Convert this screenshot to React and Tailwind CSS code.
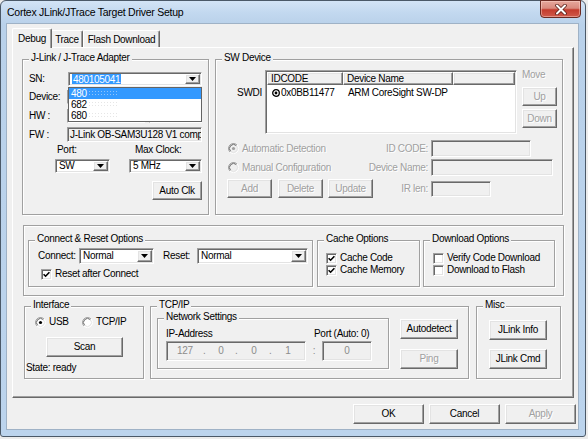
import React from 'react';

const raised = 'border border-t-white border-l-white border-r-[#696969] border-b-[#696969] shadow-[inset_-1px_-1px_0_#a0a0a0,inset_1px_1px_0_#e3e3e3] bg-[#f0f0f0]';
const sunken = 'border border-t-[#a0a0a0] border-l-[#a0a0a0] border-r-white border-b-white shadow-[inset_1px_1px_0_#696969,inset_-1px_-1px_0_#e3e3e3]';
const grayText = 'text-[#a0a0a0] [text-shadow:1px_1px_0_#fff]';

const Button = ({ children, className = '', disabled }) => (
  <div className={`${raised} flex items-center justify-center shrink-0 whitespace-nowrap ${disabled ? grayText : ''} ${className}`}>
    {children}
  </div>
);

const Arrow = () => (
  <div className={`${raised} w-[15px] h-full flex items-center justify-center shrink-0`}>
    <svg width="7" height="4" viewBox="0 0 7 4">
      <path d="M0 0h7L3.5 4z" fill="#000" />
    </svg>
  </div>
);

const Combo = ({ children, className = '' }) => (
  <div className={`${sunken} bg-white p-[1px] flex shrink-0 ${className}`}>
    <div className="flex-1 flex items-center pl-[2px] overflow-hidden whitespace-nowrap">{children}</div>
    <Arrow />
  </div>
);

const Field = ({ children, className = '', gray }) => (
  <div className={`${sunken} ${gray ? 'bg-[#f0f0f0]' : 'bg-white'} flex items-center overflow-hidden whitespace-nowrap shrink-0 ${className}`}>
    {children}
  </div>
);

const Check = ({ checked }) => (
  <div className={`${sunken} bg-white w-[11px] h-[11px] shrink-0 flex items-center justify-center`}>
    {checked && (
      <svg width="7" height="7" viewBox="0 0 7 7">
        <path d="M0.6 3.2 L2.6 5.2 L6.4 1.2" stroke="#000" strokeWidth="1.6" fill="none" />
      </svg>
    )}
  </div>
);

const Radio = ({ checked, disabled }) => (
  <svg width="11" height="11" viewBox="0 0 11 11" className="shrink-0">
    <circle cx="5.5" cy="5.5" r="5" fill={disabled ? '#f0f0f0' : '#fff'} />
    <path d="M1.96 9.04A5 5 0 0 1 9.04 1.96" stroke="#a0a0a0" fill="none" />
    <path d="M9.04 1.96A5 5 0 0 1 1.96 9.04" stroke="#fff" fill="none" />
    <path d="M2.67 8.33A4 4 0 0 1 8.33 2.67" stroke="#696969" fill="none" />
    <path d="M8.33 2.67A4 4 0 0 1 2.67 8.33" stroke="#e3e3e3" fill="none" />
    {checked && <circle cx="5.5" cy="5.5" r="1.6" fill={disabled ? '#a0a0a0' : '#000'} />}
  </svg>
);

const Group = ({ label, className = '', children }) => (
  <div className={`relative border border-[#a0a0a0] shadow-[inset_1px_1px_0_#fff,1px_1px_0_#fff] shrink-0 ${className}`}>
    {label && (
      <span className="absolute left-[6px] top-[-8px] px-[2px] bg-[#f0f0f0] leading-[12px] whitespace-nowrap">{label}</span>
    )}
    {children}
  </div>
);

// blurred-out part of the serial numbers
const Blur = ({ onBlue }) => (
  <span
    className={`inline-block w-[30px] h-[7px] ml-[1px] ${
      onBlue
        ? 'bg-[radial-gradient(circle,#8fc3fb_0.8px,transparent_1px)] bg-[length:3px_3px]'
        : 'bg-[radial-gradient(circle,#e6e6e6_0.8px,transparent_1px)] bg-[length:3px_3px]'
    }`}
  />
);

const AdapterGroup = () => (
  <Group label="J-Link / J-Trace Adapter" className="w-[187px] h-[156px]">
    <div className="flex flex-col">
      <div className="mt-[12px] h-[14px] flex items-center pl-[6px]">
        <span className="w-[39px]">SN:</span>
        <Combo className="w-[134px] h-[14px]">
          <span className="bg-[#3399ff] text-white px-[1px] leading-[11px]">480105041</span>
        </Combo>
      </div>
      <div className="mt-[4px] h-[14px] flex items-center pl-[6px]">
        <span className="w-[38px]">Device:</span>
        <Field className="w-[135px] h-[14px]" />
      </div>
      <div className="mt-[5px] h-[14px] flex items-center pl-[6px]">
        <span className="w-[38px]">HW :</span>
        <Field className="w-[78px] h-[14px]" />
        <Field className="w-[53px] h-[14px] ml-[4px]" />
      </div>
      <div className="mt-[4px] h-[15px] flex items-center pl-[6px]">
        <span className="w-[38px]">FW :</span>
        <Field gray className="w-[135px] h-[15px] pl-[2px]">J-Link OB-SAM3U128 V1 compiled</Field>
      </div>
      <div className="mt-[2px] h-[12px] flex items-center pl-[34px]">
        <span className="w-[78px]">Port:</span>
        <span>Max Clock:</span>
      </div>
      <div className="mt-[3px] h-[14px] flex items-center pl-[32px]">
        <Combo className="w-[55px] h-[14px]">SW</Combo>
        <Combo className="w-[73px] h-[14px] ml-[19px]">5 MHz</Combo>
      </div>
      <div className="mt-[8px] flex pl-[129px]">
        <Button className="w-[50px] h-[19px]">Auto Clk</Button>
      </div>
    </div>

    {/* open SN drop-down list */}
    <div className="absolute left-[45px] top-[27px] w-[134px] h-[35px] border border-[#646464] bg-white flex flex-col z-10">
      <div className="h-[11px] bg-[#3399ff] text-white flex items-center pl-[2px] leading-[11px]">
        480<Blur onBlue />
      </div>
      <div className="h-[11px] flex items-center pl-[2px] leading-[11px]">
        682<Blur />
      </div>
      <div className="h-[11px] flex items-center pl-[2px] leading-[11px]">
        680<Blur />
      </div>
    </div>
  </Group>
);

const SwDeviceGroup = () => (
  <Group label="SW Device" className="w-[348px] h-[156px]">
    <div className="flex flex-col">
      <div className="mt-[10px] flex items-start">
        <div className="w-[49px] h-[64px] text-right pr-[3px] pt-[17px]">SWDI</div>
        <div className={`${sunken} bg-white w-[252px] h-[64px] p-[1px] flex flex-col shrink-0`}>
          <div className="h-[13px] flex">
            <div className={`${raised} w-[76px] h-full flex items-center pl-[3px]`}>IDCODE</div>
            <div className={`${raised} w-[110px] h-full flex items-center pl-[3px]`}>Device Name</div>
            <div className={`${raised} flex-1 h-full`} />
          </div>
          <div className="mt-[2px] h-[12px] flex items-center">
            <div className="w-[76px] flex items-center pl-[5px]">
              <svg width="8" height="8" viewBox="0 0 8 8" className="shrink-0">
                <circle cx="4" cy="4" r="3.3" stroke="#000" strokeWidth="1.3" fill="none" />
                <circle cx="4" cy="4" r="1.4" fill="#000" />
              </svg>
              <span className="ml-[1px]">0x0BB11477</span>
            </div>
            <div className="pl-[5px] whitespace-nowrap">ARM CoreSight SW-DP</div>
          </div>
        </div>
        <div className="ml-[5px] -mt-[1px] flex flex-col">
          <span className={`h-[12px] ${grayText}`}>Move</span>
          <Button disabled className="w-[35px] h-[19px] mt-[6px]">Up</Button>
          <Button disabled className="w-[35px] h-[19px] mt-[3px]">Down</Button>
        </div>
      </div>

      <div className="mt-[6px] h-[17px] flex items-center">
        <div className="w-[150px] shrink-0 flex items-center pl-[12px]">
          <Radio checked disabled />
          <span className={`ml-[3px] whitespace-nowrap ${grayText}`}>Automatic Detection</span>
        </div>
        <span className={`w-[62px] text-right ${grayText}`}>ID CODE:</span>
        <Field gray className="w-[100px] h-[17px] ml-[3px]" />
      </div>
      <div className="mt-[2px] h-[17px] flex items-center">
        <div className="w-[150px] shrink-0 flex items-center pl-[12px]">
          <Radio disabled />
          <span className={`ml-[3px] whitespace-nowrap ${grayText}`}>Manual Configuration</span>
        </div>
        <span className={`w-[62px] text-right whitespace-nowrap ${grayText}`}>Device Name:</span>
        <Field gray className="w-[122px] h-[17px] ml-[3px]" />
      </div>
      <div className="mt-[3px] h-[19px] flex items-center">
        <div className="w-[150px] shrink-0 flex items-center pl-[11px]">
          <Button disabled className="w-[45px] h-[19px]">Add</Button>
          <Button disabled className="w-[45px] h-[19px] ml-[6px]">Delete</Button>
          <Button disabled className="w-[45px] h-[19px] ml-[5px]">Update</Button>
        </div>
        <span className={`w-[62px] text-right ${grayText}`}>IR len:</span>
        <Field gray className="w-[60px] h-[16px] ml-[3px]" />
      </div>
    </div>
  </Group>
);

const OptionsRow = () => (
  <Group className="w-[541px] h-[71px]">
    <div className="flex items-start mt-[14px] pl-[4px]">
      <Group label="Connect & Reset Options" className="w-[285px] h-[47px]">
        <div className="flex flex-col">
          <div className="mt-[7px] h-[16px] flex items-center pl-[9px]">
            <span className="w-[41px]">Connect:</span>
            <Combo className="w-[75px] h-[16px]">Normal</Combo>
            <span className="w-[34px] ml-[9px]">Reset:</span>
            <Combo className="w-[111px] h-[16px]">Normal</Combo>
          </div>
          <div className="mt-[4px] h-[12px] flex items-center pl-[12px]">
            <Check checked />
            <span className="ml-[3px]">Reset after Connect</span>
          </div>
        </div>
      </Group>
      <Group label="Cache Options" className="w-[103px] h-[47px] ml-[4px]">
        <div className="flex flex-col pl-[8px] pt-[11px]">
          <div className="h-[12px] flex items-center">
            <Check checked />
            <span className="ml-[3px]">Cache Code</span>
          </div>
          <div className="h-[12px] flex items-center">
            <Check checked />
            <span className="ml-[3px]">Cache Memory</span>
          </div>
        </div>
      </Group>
      <Group label="Download Options" className="w-[132px] h-[47px] ml-[3px]">
        <div className="flex flex-col pl-[9px] pt-[11px]">
          <div className="h-[12px] flex items-center">
            <Check />
            <span className="ml-[3px] whitespace-nowrap">Verify Code Download</span>
          </div>
          <div className="h-[12px] flex items-center">
            <Check />
            <span className="ml-[3px] whitespace-nowrap">Download to Flash</span>
          </div>
        </div>
      </Group>
    </div>
  </Group>
);

const BottomRow = () => (
  <div className="mt-[10px] ml-[11px] flex items-start">
    <Group label="Interface" className="w-[120px] h-[73px]">
      <div className="flex flex-col">
        <div className="mt-[9px] h-[12px] flex items-center pl-[10px]">
          <div className="w-[47px] flex items-center">
            <Radio checked />
            <span className="ml-[3px]">USB</span>
          </div>
          <Radio />
          <span className="ml-[3px]">TCP/IP</span>
        </div>
        <Button className="w-[77px] h-[20px] mt-[9px] ml-[21px]">Scan</Button>
        <div className="mt-[5px] h-[12px] pl-[1px]">State: ready</div>
      </div>
    </Group>

    <Group label="TCP/IP" className="w-[319px] h-[73px] ml-[6px]">
      <div className="flex items-start">
        <Group label="Network Settings" className="w-[232px] h-[51px] ml-[6px] mt-[11px]">
          <div className="flex flex-col pl-[8px]">
            <div className="mt-[9px] h-[12px] flex">
              <span className="w-[148px]">IP-Address</span>
              <span className="whitespace-nowrap">Port (Auto: 0)</span>
            </div>
            <div className="mt-[1px] h-[20px] flex items-center">
              <Field gray className="w-[140px] h-[20px] text-[#8c8c8c]">
                <span className="w-[36px] text-center">127</span>
                <span className="w-[4px]">.</span>
                <span className="w-[28px] text-center">0</span>
                <span className="w-[4px]">.</span>
                <span className="w-[30px] text-center">0</span>
                <span className="w-[4px]">.</span>
                <span className="w-[30px] text-center">1</span>
              </Field>
              <span className="w-[16px] text-center text-[#8c8c8c]">:</span>
              <Field gray className="w-[50px] h-[20px] justify-center text-[#8c8c8c]">0</Field>
            </div>
          </div>
        </Group>
        <div className="ml-[11px] mt-[12px] flex flex-col">
          <Button className="w-[58px] h-[20px]">Autodetect</Button>
          <Button disabled className="w-[58px] h-[20px] mt-[10px]">Ping</Button>
        </div>
      </div>
    </Group>

    <Group label="Misc" className="w-[85px] h-[73px] ml-[7px]">
      <div className="flex flex-col pl-[12px] pt-[13px]">
        <Button className="w-[58px] h-[20px]">JLink Info</Button>
        <Button className="w-[58px] h-[20px] mt-[9px]">JLink Cmd</Button>
      </div>
    </Group>
  </div>
);

const Tabs = () => (
  <div className="h-[23px] pl-[5px] flex items-end relative z-10 whitespace-nowrap">
    <div className="w-[40px] h-[20px] -mb-[1px] bg-[#f0f0f0] border-l border-t border-r border-l-white border-t-white border-r-[#696969] rounded-t-[2px] shadow-[inset_-1px_0_0_#a0a0a0] flex items-center justify-center">
      Debug
    </div>
    <div className="w-[31px] h-[17px] bg-[#f0f0f0] border-t border-r border-t-white border-r-[#696969] rounded-tr-[2px] shadow-[inset_-1px_0_0_#a0a0a0] flex items-center justify-center pt-[1px]">
      Trace
    </div>
    <div className="w-[77px] h-[17px] bg-[#f0f0f0] border-l border-t border-r border-l-white border-t-white border-r-[#696969] rounded-t-[2px] shadow-[inset_-1px_0_0_#a0a0a0] flex items-center justify-center pt-[1px]">
      Flash Download
    </div>
  </div>
);

export default function App() {
  return (
    <div className="w-[588px] h-[439px] bg-[#ececec] font-['Liberation_Sans',Arial,sans-serif] text-[10px] tracking-[-0.3px] leading-[12px] text-black">
      <div className="w-[586px] h-[437px] border border-[#4b5968] rounded-t-[6px] rounded-b-[3px] bg-[linear-gradient(180deg,#d3e4f6_0px,#c2d8ef_12px,#b9d1ea_24px,#bcd4ed_100%)] flex flex-col">
        {/* title bar */}
        <div className="h-[23px] flex items-start justify-between">
          <div className="pl-[6px] pt-[4px] text-[10.5px] tracking-[-0.25px] leading-[14px] text-black whitespace-nowrap">
            Cortex JLink/JTrace Target Driver Setup
          </div>
          <div className="w-[41px] h-[18px] -mt-[1px] mr-[4px] rounded-b-[4px] border border-[#6b2a22] bg-[linear-gradient(180deg,#e6a79c_0%,#d98a7e_45%,#c43c2e_55%,#cf5a4b_100%)] shadow-[inset_0_0_0_1px_rgba(255,220,210,0.45)] flex items-center justify-center">
            <svg width="12" height="11" viewBox="0 0 12 11">
              <path d="M2 1.5 L10 9.5 M10 1.5 L2 9.5" stroke="#5b2019" strokeWidth="3.6" strokeLinecap="round" />
              <path d="M2 1.5 L10 9.5 M10 1.5 L2 9.5" stroke="#fff" strokeWidth="2" strokeLinecap="round" />
            </svg>
          </div>
        </div>

        {/* client area */}
        <div className="ml-[6px] w-[571px] h-[405px] bg-[#f0f0f0] shadow-[0_0_0_1px_#9fb2c6] flex flex-col">
          <Tabs />
          <div className="ml-[5px] w-[562px] h-[351px] border border-t-white border-l-white border-r-[#696969] border-b-[#696969] shadow-[inset_-1px_-1px_0_#a0a0a0] flex flex-col">
            <div className="mt-[11px] ml-[9px] flex items-start">
              <AdapterGroup />
              <div className="ml-[6px]">
                <SwDeviceGroup />
              </div>
            </div>
            <div className="mt-[10px] ml-[10px]">
              <OptionsRow />
            </div>
            <BottomRow />
          </div>
          <div className="mt-[6px] pr-[2px] flex justify-end">
            <Button className="w-[71px] h-[20px]">OK</Button>
            <Button className="w-[71px] h-[20px] ml-[5px]">Cancel</Button>
            <Button disabled className="w-[71px] h-[20px] ml-[5px]">Apply</Button>
          </div>
        </div>
      </div>
    </div>
  );
}
